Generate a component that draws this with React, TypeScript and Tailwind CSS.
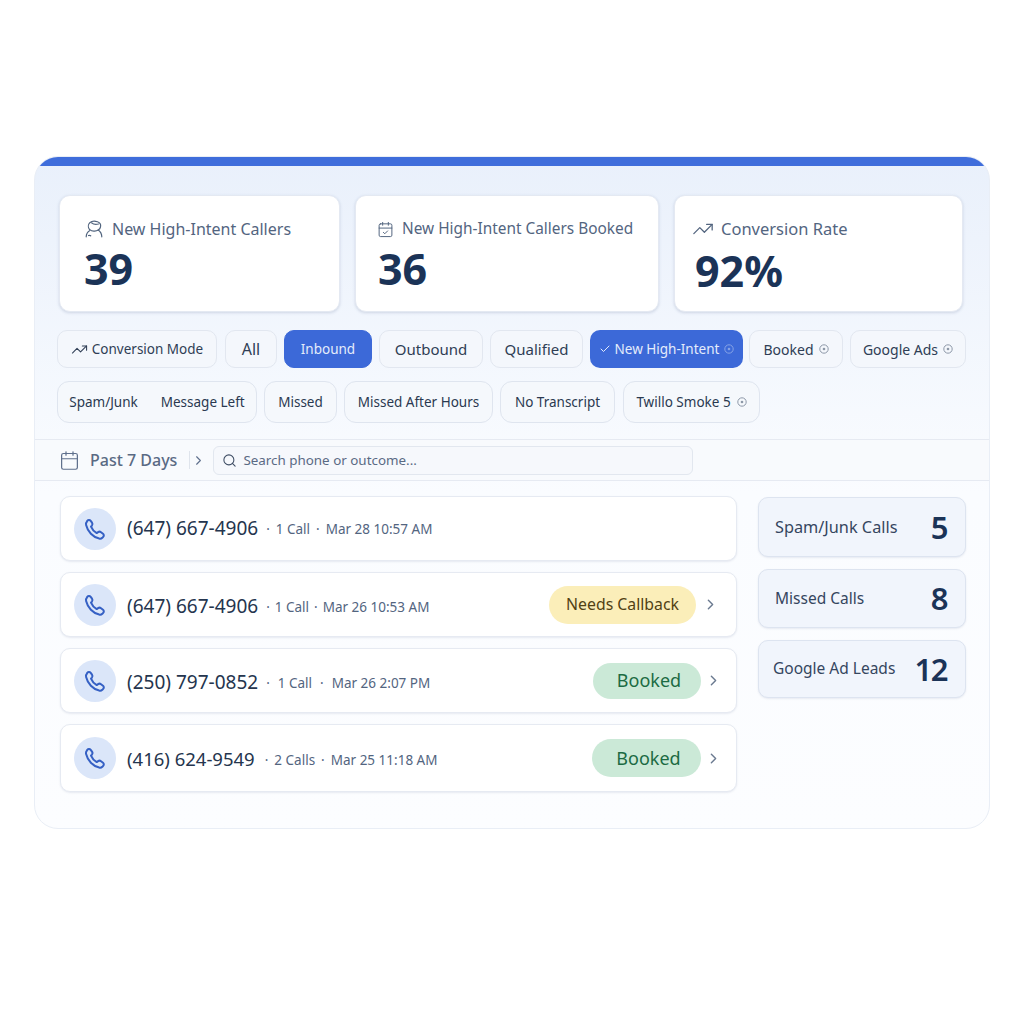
import { Calendar, CalendarCheck, Check, ChevronRight, Search, TrendingUp } from "lucide-react";

const row1 = [
  { label: "All", w: "w-[52px] ml-[1px] text-[16px]" },
  { label: "Inbound", w: "w-[88px] text-[13.500px]", active: true },
  { label: "Outbound", w: "w-[104px] text-[15px]" },
  { label: "Qualified", w: "w-[93px] text-[15px]" },
];

const row2 = [
  { label: "Missed", w: "w-[73px]" },
  { label: "Missed After Hours", w: "w-[149px]" },
  { label: "No Transcript", w: "w-[115px]" },
];

const calls = [
  { phone: "(647) 667-4906", meta: "1 Call", date: "Mar 28 10:57 AM", h: "h-[65px]", size: "text-[19px]", gap: "ml-[8px] gap-[6px]", offset: "" },
  { phone: "(647) 667-4906", meta: "1 Call", date: "Mar 26 10:53 AM", h: "h-[65px]", size: "text-[19px]", gap: "ml-[8px] gap-[5px]", offset: "mt-[4px]", status: "callback" },
  { phone: "(250) 797-0852", meta: "1 Call", date: "Mar 26 2:07 PM", h: "h-[65px]", size: "text-[19px]", gap: "ml-[8px] gap-[8px]", offset: "mt-[4px]", status: "booked", badge: "h-[36px] w-[108px]" },
  { phone: "(416) 624-9549", meta: "2 Calls", date: "Mar 25 11:18 AM", h: "h-[68px]", size: "text-[18.500px]", gap: "ml-[10px] gap-[6px]", offset: "mt-[2px]", status: "booked", badge: "h-[38px] w-[109px]" },
];

const sideStats = [
  { label: "Spam/Junk Calls", value: "5", h: "h-[60px]", size: "text-[16.300px]" },
  { label: "Missed Calls", value: "8", h: "h-[59px]", size: "text-[15.500px]" },
  { label: "Google Ad Leads", value: "12", h: "h-[58px]", size: "text-[15.500px] -ml-[2px]" },
];

function InfoDot({ className }: { className: string }) {
  return (
    <svg width="10" height="10" viewBox="0 0 10 10" fill="none" className={className}>
      <circle cx="5" cy="5" r="4.2" stroke="currentColor" strokeWidth="1" />
      <circle cx="5" cy="5" r="1.3" fill="currentColor" />
    </svg>
  );
}

function CallersIcon() {
  return (
    <svg width="20" height="20" viewBox="0 0 20 20" fill="none" stroke="#52657f" strokeWidth="1.2" strokeLinecap="round" strokeLinejoin="round">
      <path d="M5.500 10.500C3.900 8.500 4 5.500 5.800 3.800 7.600 2.200 11 2 13.500 2.800c2.400.8 3.500 3 3 5.200-.3 1.300-1 2.300-2.200 3" />
      <path d="M5.500 10.500c1.600 1.300 3.300 1.800 5 1.600 1.500-.1 2.800-.5 3.800-1.100" />
      <path d="M7.500 3.800c1.500 1.300 4.500 2 7 1.200" />
      <path d="M2.200 17.800c.1-2.700 1.200-4.800 3.300-6.100M17.800 17.800c-.1-2.700-1.100-5.100-3.500-6.800" />
      <path d="M4.500 16.500c.8-.4 1.500-.3 2.200.3" />
    </svg>
  );
}

// handset drawn by hand, the package one has a boxier shape
function PhoneIcon() {
  return (
    <svg width="24" height="24" viewBox="0 0 24 24" fill="none" stroke="#3560c4" strokeWidth="2" strokeLinecap="round" strokeLinejoin="round">
      <path d="M4.200 3.800c.9-1 2.600-1.100 3.500 0l1.300 1.800c.7 1 .6 2.100-.1 3l-.9 1.100c1.100 2.800 3 4.900 5.700 6.400l1.400-1c.9-.6 2-.6 2.900.1l2 1.500c1 .8 1.100 2.200.2 3.100l-.9 1c-.8.8-2 1.100-3.100.8C9.900 20.200 4.700 14.700 3.100 8c-.3-1.300 0-2.600.9-3.500z" />
    </svg>
  );
}

function StatCard({ icon, label, value, className, labelClass = "text-[16px]", numClass = "mt-[4px]" }: { icon: React.ReactNode; label: string; value: string; className: string; labelClass?: string; numClass?: string }) {
  return (
    <div className={`h-[117px] rounded-[11px] border border-[#e4e9f2] bg-white pt-[21px] shadow-[0_1px_3px_rgba(80,100,140,0.22)] ${className}`}>
      <div className={`flex h-[24px] items-center whitespace-nowrap text-[#53657f] ${labelClass}`}>
        {icon}
        <span>{label}</span>
      </div>
      <div className={`text-[43px] leading-[48px] font-bold text-[#1b3357] ${numClass}`}>{value}</div>
    </div>
  );
}

function Chip({ label, w, active }: { label: string; w: string; active?: boolean }) {
  return (
    <div
      className={`flex h-[38px] items-center justify-center rounded-[10px] border ${w} ${
        active ? "border-[#3c69d8] bg-[#3c69d8] text-[#e4ecfb]" : "border-[#e2e7f0] bg-[#f4f7fc] text-[#2f3e55]"
      }`}
    >
      {label}
    </div>
  );
}

function TallChip({ children, w }: { children: React.ReactNode; w: string }) {
  return (
    <div className={`flex h-[42px] items-center justify-center rounded-[12px] border border-[#dfe5ef] bg-[#f5f8fc] text-[13.500px] text-[#2a3950] ${w}`}>
      {children}
    </div>
  );
}

function CallRow({ phone, meta, date, h, size, gap, offset, status, badge }: { phone: string; meta: string; date: string; h: string; size: string; gap: string; offset: string; status?: string; badge?: string }) {
  return (
    <div
      className={`flex items-center rounded-[10px] border border-[#e6eaf2] bg-white pl-[13px] shadow-[0_1px_2px_rgba(80,100,140,0.12)] ${h} ${
        status === "callback" ? "pr-[17px]" : "pr-[14px]"
      }`}
    >
      <div className="flex h-[42px] w-[42px] shrink-0 items-center justify-center rounded-full bg-[#dbe6f9]">
        <PhoneIcon />
      </div>
      <div className={`ml-[11px] flex items-center ${offset}`}>
        <span className={`text-[#25354e] ${size}`}>{phone}</span>
        <span className={`mt-[2px] flex items-center text-[13.500px] text-[#53657f] ${gap}`}>
          <span>·</span>
          <span>{meta}</span>
          <span>·</span>
          <span>{date}</span>
        </span>
      </div>
      {status === "callback" && (
        <span className="ml-auto flex h-[38px] w-[147px] items-center justify-center rounded-full bg-[#fbeeb9] text-[15.800px] text-[#514114]">
          Needs Callback
        </span>
      )}
      {status === "booked" && (
        <span className={`ml-auto flex items-center justify-center rounded-full bg-[#cbe9d7] pl-[4px] text-[18px] text-[#1c6b43] ${badge}`}>
          Booked
        </span>
      )}
      {status && <ChevronRight size={17} strokeWidth={2} className={`text-[#6b7a90] ${status === "callback" ? "ml-[6px]" : "ml-[4px]"}`} />}
    </div>
  );
}

export default function App() {
  return (
    <div className="min-h-[1024px] bg-white pt-[156px] font-['Noto_Sans',sans-serif]">
      <div className="relative mx-[34px] h-[673px] w-[956px] overflow-hidden rounded-[24px] border border-[#e9eef6] bg-gradient-to-b from-[#e9f0fb] via-[#fafcff] via-50% to-[#fcfdff]">
        <div className="-mt-px h-[10px] bg-[#3f6ddb]" />

        {/* Top stats */}
        <div className="mt-[29px] flex gap-[15px] pl-[24px]">
          <StatCard className="w-[281px] pl-[24px]" icon={<span className="mr-[8px] flex"><CallersIcon /></span>} label="New High-Intent Callers" value="39" />
          <StatCard className="w-[304px] pl-[21px]" labelClass="text-[15.400px]" icon={<CalendarCheck size={17} strokeWidth={1.4} className="mr-[8px]" />} label="New High-Intent Callers Booked" value="36" numClass="mt-[4px] ml-[1px]" />
          <StatCard className="w-[289px] pl-[17px]" labelClass="text-[16.500px]" icon={<TrendingUp size={22} strokeWidth={1.4} className="mr-[7px]" />} label="Conversion Rate" value="92%" numClass="mt-[6px] ml-[3px]" />
        </div>

        {/* Filter chips */}
        <div className="mt-[18px] flex gap-[7px] pl-[22px]">
          <div className="flex h-[38px] w-[160px] items-center justify-center gap-[4px] rounded-[10px] border border-[#e2e7f0] bg-[#f4f7fc] text-[13.500px] text-[#2f3e55]">
            <TrendingUp size={17} strokeWidth={1.5} />
            Conversion Mode
          </div>
          {row1.map((c) => (
            <Chip key={c.label} {...c} />
          ))}
          <div className="flex h-[38px] w-[153px] items-center justify-center gap-[4px] rounded-[10px] bg-[#3c69d8] text-[13.500px] text-[#e4ecfb]">
            <Check size={12} strokeWidth={2} />
            New High-Intent
            <InfoDot className="ml-[1px] text-[#86a3e6]" />
          </div>
          <div className="-ml-[1px] flex h-[38px] w-[94px] items-center justify-center gap-[5px] rounded-[10px] border border-[#e2e7f0] bg-[#f4f7fc] text-[14px] text-[#2f3e55]">
            Booked
            <InfoDot className="text-[#8d98a8]" />
          </div>
          <div className="flex h-[38px] w-[116px] items-center justify-center gap-[5px] rounded-[10px] border border-[#e2e7f0] bg-[#f4f7fc] text-[14px] text-[#2f3e55]">
            Google Ads
            <InfoDot className="text-[#8d98a8]" />
          </div>
        </div>

        <div className="mt-[13px] flex gap-[7px] pl-[22px]">
          <TallChip w="w-[200px] gap-[23px] text-[13.200px]">
            <span>Spam/Junk</span>
            <span>Message Left</span>
          </TallChip>
          {row2.map((c) => (
            <TallChip key={c.label} w={c.w}>
              {c.label}
            </TallChip>
          ))}
          <TallChip w="w-[137px] ml-[1px] gap-[6px]">
            Twillo Smoke 5
            <InfoDot className="text-[#8d98a8]" />
          </TallChip>
        </div>

        {/* Toolbar */}
        <div className="mt-[16px] flex h-[42px] items-center border-y border-[#e6eaf2] bg-[#f8fafd] pl-[24px]">
          <Calendar size={21} strokeWidth={1.4} className="text-[#5e6f8c]" />
          <span className="ml-[10px] text-[16px] font-medium text-[#5a6a84]">Past 7 Days</span>
          <div className="ml-[12px] h-[18px] w-px bg-[#dfe4ec]" />
          <ChevronRight size={15} strokeWidth={1.8} className="ml-[1px] text-[#5e6f8c]" />
          <div className="ml-[7px] flex h-[29px] w-[480px] items-center gap-[6px] rounded-[6px] border border-[#e2e7ef] bg-[#f6f8fc] pl-[8px] text-[13.400px] text-[#5a6a84]">
            <Search size={15} strokeWidth={1.7} className="text-[#3d4c63]" />
            Search phone or outcome...
          </div>
        </div>

        {/* Calls + side stats */}
        <div className="mt-[15px] flex items-start pl-[25px]">
          <div className="flex w-[677px] flex-col gap-[11px]">
            {calls.map((c, i) => (
              <CallRow key={i} {...c} />
            ))}
          </div>
          <div className="mt-[1px] ml-[21px] flex w-[208px] flex-col gap-[12px]">
            {sideStats.map((s) => (
              <div key={s.label} className={`flex items-center justify-between rounded-[10px] border border-[#dde4f0] bg-[#f1f5fc] pr-[18px] pl-[16px] shadow-[0_1px_2px_rgba(80,100,140,0.12)] ${s.h}`}>
                <span className={`text-[#35465f] ${s.size}`}>{s.label}</span>
                <span className="text-[31px] font-semibold tracking-[-1.500px] text-[#1b3357]">{s.value}</span>
              </div>
            ))}
          </div>
        </div>
      </div>
    </div>
  );
}
